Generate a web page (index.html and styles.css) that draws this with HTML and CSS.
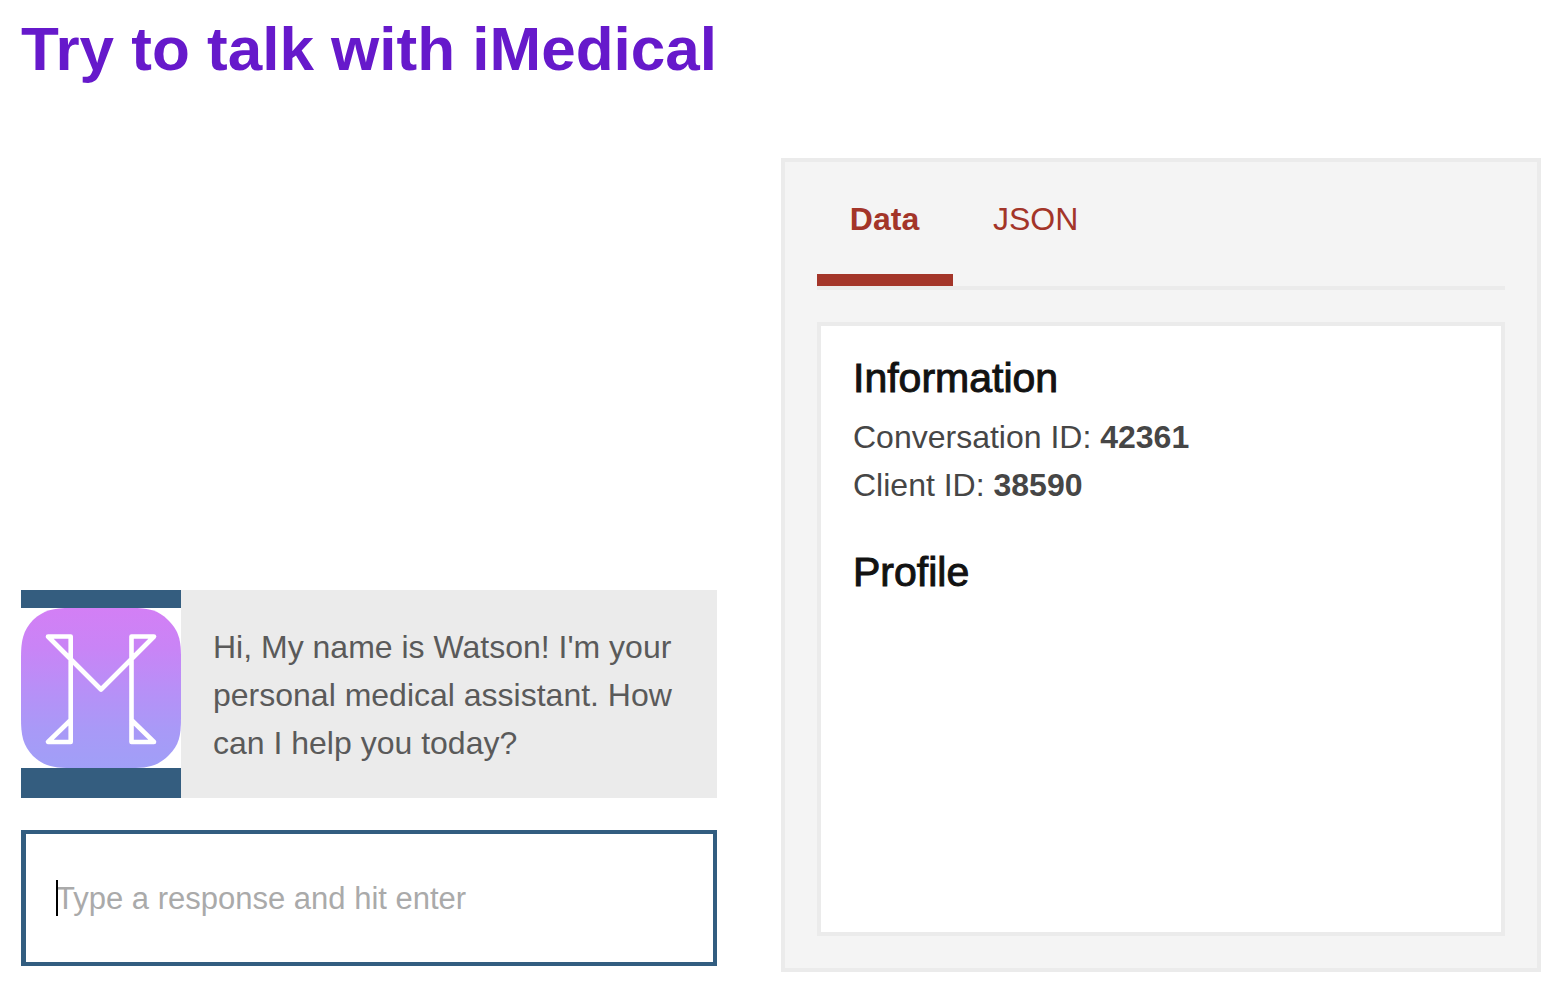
FILE: index.html
```html
<!DOCTYPE html>
<html lang="en">
<head>
<meta charset="utf-8">
<meta name="viewport" content="width=device-width, initial-scale=1">
<title>iMedical</title>
<link rel="stylesheet" href="styles.css">
</head>
<body class="page">
<header class="header">
<h1 class="title">Try to talk with iMedical</h1>
</header>
<main class="columns">
<section class="chat" aria-label="Chat">
<article class="message">
<div class="avatar">
<svg class="logo" viewBox="0 0 160 160" role="img" aria-label="iMedical">
<defs>
<linearGradient id="logo-fill" x1="0" y1="0" x2="0" y2="1">
<stop offset="0" stop-color="#d37ff5"/>
<stop offset="0.25" stop-color="#c984f6"/>
<stop offset="0.5" stop-color="#b88ff7"/>
<stop offset="0.75" stop-color="#a999f7"/>
<stop offset="1" stop-color="#a09ff7"/>
</linearGradient>
</defs>
<path fill="url(#logo-fill)" d="M50 0H110C128 0 137 2 147 12C158 23 160 32 160 50V110C160 128 158 137 148 147C137 158 128 160 110 160H50C32 160 23 158 12 148C2 137 0 128 0 110V50C0 32 2 23 12 12C23 2 32 0 50 0Z"/>
<path class="logo-line" d="M49.700 112L27 134H49.700V28.500H27L80 81.500L133 28.500H110.500V134H133L110.500 112"/>
</svg>
</div>
<p class="message-text">Hi, My name is Watson! I'm your personal medical assistant. How can I help you today?</p>
</article>
<form class="reply">
<input class="reply-input" type="text" placeholder="Type a response and hit enter" aria-label="Your response">
<span class="caret" aria-hidden="true"></span>
</form>
</section>
<section class="panel">
<div class="tabs" role="tablist">
<button class="tab tab-active" type="button" role="tab" aria-selected="true" aria-controls="data" id="data-tab">Data</button>
<button class="tab" type="button" role="tab" aria-selected="false">JSON</button>
</div>
<div class="card" role="tabpanel" id="data" aria-labelledby="data-tab">
<h2 class="subtitle">Information</h2>
<p class="line">Conversation ID: <strong>42361</strong></p>
<p class="line">Client ID: <strong>38590</strong></p>
<h2 class="subtitle subtitle-next">Profile</h2>
</div>
</section>
</main>
</body>
</html>
```
FILE: styles.css
```css
* { box-sizing: border-box; }

.page {
  display: flex;
  flex-direction: column;
  min-height: 100vh;
  margin: 0;
  padding: 0 23px 16px 21px;
  background: #fff;
  color: #464646;
  font: 32px/48px "Liberation Sans", Arial, sans-serif;
}

.header { padding: 9px 0 69px; }

.title {
  margin: 0;
  color: #6619cb;
  font-size: 62px;
  line-height: 80px;
}

.columns {
  flex: 1;
  display: grid;
  grid-template-columns: 696fr 760fr;
  gap: 64px;
}

.chat {
  display: flex;
  flex-direction: column;
  justify-content: flex-end;
  gap: 32px;
  min-width: 0;
  padding-bottom: 6px;
}

.message {
  display: flex;
  background: #ebebeb;
  color: #5a5a5a;
}

.avatar {
  flex: none;
  width: 160px;
  padding: 18px 0 30px;
  background: #345d7f;
}

.logo {
  display: block;
  width: 160px;
  height: 160px;
  background: #fff;
}

.logo-line {
  fill: none;
  stroke: #fff;
  stroke-width: 4.6;
  stroke-linejoin: round;
  stroke-linecap: round;
}

.message-text {
  margin: 0;
  padding: 33px 24px 31px 32px;
}

.reply { position: relative; }

.reply-input {
  display: block;
  width: 100%;
  height: 136px;
  padding: 2px 32px 0 30px;
  border: 4px solid #325d80;
  border-left-width: 5px;
  border-radius: 0;
  outline: none;
  background: #fff;
  color: #464646;
  font: inherit;
  font-size: 31px;
}

.reply-input::placeholder { color: #aaa; opacity: 1; }

.caret {
  position: absolute;
  top: 50px;
  left: 35px;
  width: 2px;
  height: 36px;
  background: #000;
}

.panel {
  display: flex;
  flex-direction: column;
  gap: 32px;
  min-width: 0;
  padding: 32px;
  border: 4px solid #ebebeb;
  background: #f4f4f4;
}

.tabs {
  display: flex;
  gap: 8px;
  border-bottom: 4px solid #ebebeb;
}

.tab {
  padding: 1px 33px 31px 32px;
  border: 0;
  border-bottom: 12px solid transparent;
  background: none;
  color: #a33529;
  font: inherit;
}

.tab-active {
  min-width: 136px;
  border-bottom-color: #a33529;
  font-weight: 700;
}

.card {
  flex: 1;
  padding: 28px 32px;
  border: 4px solid #ebebeb;
  background: #fff;
}

.subtitle {
  margin: 0 0 11px;
  color: #121212;
  font-size: 41px;
  font-weight: 400;
  line-height: 48px;
  -webkit-text-stroke: 1px #121212;
}

.subtitle-next { margin-top: 39px; }

.line { margin: 0; }
```
